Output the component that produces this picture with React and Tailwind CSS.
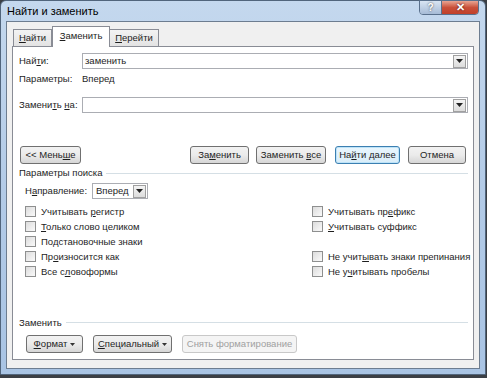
const font = { fontFamily: '"Liberation Sans", Arial, sans-serif' };

function DropButton() {
  return (
    <div className="flex h-[13px] w-[13px] items-center justify-center border border-[#a0a0a0] bg-gradient-to-b from-[#f4f4f4] to-[#dcdcdc]">
      <svg width="7" height="4" viewBox="0 0 7 4">
        <path d="M0 0h7L3.5 4z" fill="#222" />
      </svg>
    </div>
  );
}

function Caret({ color = '#333' }) {
  return (
    <svg width="5" height="3" viewBox="0 0 5 3" className="ml-[3px] inline-block align-middle">
      <path d="M0 0h5L2.5 3z" fill={color} />
    </svg>
  );
}

function Combo({ value }) {
  return (
    <div className="flex h-[16px] flex-1 items-center border border-[#abadb3] bg-white pl-[2px] pr-[1px]">
      <span className="flex-1 text-[#1e1e1e]">{value}</span>
      <DropButton />
    </div>
  );
}

function Btn({ children, className = '', primary, disabled }) {
  return (
    <div
      className={`flex h-[18px] items-center justify-center whitespace-nowrap rounded-[3px] border ${
        primary
          ? 'border-[#3c7fb1] bg-gradient-to-b from-[#eaf6fd] to-[#d9edf9] shadow-[inset_0_0_0_1px_#bde3f8]'
          : disabled
          ? 'border-[#c8c8c8] bg-[#f4f4f4] text-[#a0a0a0]'
          : 'border-[#707070] bg-gradient-to-b from-[#f2f2f2] via-[#ebebeb] to-[#d6d6d6]'
      } ${className}`}
    >
      <span>{children}</span>
    </div>
  );
}

function Check({ children }) {
  return (
    <div className="flex h-[15px] items-center gap-[5px] whitespace-nowrap">
      <div className="h-[11px] w-[11px] border border-[#8e8f8f] bg-gradient-to-br from-[#dcdcdc] to-[#fafafa]" />
      <span>{children}</span>
    </div>
  );
}

function U({ children }) {
  return <span className="underline underline-offset-1">{children}</span>;
}

function GroupLabel({ children }) {
  return (
    <div className="flex items-center gap-[4px]">
      <span>{children}</span>
      <div className="h-px flex-1 bg-[#d5dfe5]" />
    </div>
  );
}

export default function App() {
  return (
    <div className="h-[378px] w-[487px] overflow-hidden bg-[#3b3f45] text-[9.5px] text-[#1e1e1e]" style={font}>
      <div className="relative h-[375px] w-[486px] rounded-t-[6px] border border-[#51657c] bg-gradient-to-b from-[#c4d8ee] via-[#b3cbe7] to-[#a9c4e4] px-[5px] pb-[5px] pt-[20px]">
        <div className="absolute left-[6px] top-[2px] text-[11px] text-black">Найти и заменить</div>
        <div className="absolute right-[6px] top-[-1px] flex h-[15px] overflow-hidden rounded-b-[4px] border border-[#59708c]">
          <div className="flex w-[21px] items-center justify-center bg-gradient-to-b from-[#d9e5f3] to-[#a6bbd6] text-[10px] font-bold text-white [text-shadow:0_0_2px_#333]">?</div>
          <div className="flex w-[37px] items-center justify-center border-l border-[#59708c] bg-gradient-to-b from-[#e8a493] via-[#c9503a] to-[#c0402a] text-[11px] font-bold text-white [text-shadow:0_0_2px_#400]">✕</div>
        </div>
        <div className="flex h-full flex-col border border-[#6d7d90] bg-[#f0f0f0] px-[5px] pb-[8px] pt-[4px]">
          <div className="flex items-end pl-[1px]">
            <div className="flex h-[17px] w-[39px] items-center justify-center border border-b-0 border-[#898c95] bg-gradient-to-b from-[#f3f3f3] to-[#e3e3e3]">
              <span><U>Н</U>айти</span>
            </div>
            <div className="z-10 -mb-px flex h-[21px] w-[58px] items-center justify-center border border-b-0 border-[#898c95] bg-white pb-[2px]">
              <span><U>З</U>аменить</span>
            </div>
            <div className="flex h-[17px] w-[49px] items-center justify-center border border-b-0 border-l-0 border-[#898c95] bg-gradient-to-b from-[#f3f3f3] to-[#e3e3e3]">
              <span><U>П</U>ерейти</span>
            </div>
          </div>
          <div className="flex flex-1 flex-col border border-[#898c95] bg-white pl-[6px] pr-[5px] pt-[6px]">
            <div className="flex items-center">
              <span className="w-[63px] whitespace-nowrap">Най<U>т</U>и:</span>
              <Combo value="заменить" />
            </div>
            <div className="mt-[3px] flex h-[14px] items-center">
              <span className="w-[63px]">Параметры:</span>
              <span>Вперед</span>
            </div>
            <div className="mt-[11px] flex items-center">
              <span className="w-[63px] whitespace-nowrap">Замени<U>т</U>ь <U>н</U>а:</span>
              <Combo value="" />
            </div>
            <div className="mt-[33px] flex items-center">
              <Btn className="ml-[1px] w-[61px]">&lt;&lt; Мень<U>ш</U>е</Btn>
              <div className="flex-1" />
              <Btn className="w-[59px]">За<U>м</U>енить</Btn>
              <Btn className="ml-[7px] w-[70px]">Заменить <U>в</U>се</Btn>
              <Btn primary className="ml-[9px] w-[65px]">На<U>й</U>ти далее</Btn>
              <Btn className="ml-[8px] mr-[2px] w-[58px]">Отмена</Btn>
            </div>
            <div className="mt-[2px]">
              <GroupLabel>Параметры поиска</GroupLabel>
            </div>
            <div className="ml-[6px] mt-[3px] flex items-center">
              <span className="w-[67px] whitespace-nowrap">Н<U>а</U>правление:</span>
              <div className="flex h-[16px] w-[56px] items-center border border-[#abadb3] bg-white pl-[3px] pr-[1px]">
                <span className="flex-1">Вперед</span>
                <DropButton />
              </div>
            </div>
            <div className="ml-[6px] mt-[5px] grid grid-cols-[287px_1fr]">
              <Check>Учитывать <U>р</U>егистр</Check>
              <Check>Учитывать пр<U>е</U>фикс</Check>
              <Check><U>Т</U>олько слово целиком</Check>
              <Check><U>У</U>читывать суффикс</Check>
              <Check>Подстановочные знаки</Check>
              <div />
              <Check>Пр<U>о</U>износится как</Check>
              <Check>Не учит<U>ы</U>вать знаки препинания</Check>
              <Check>Все с<U>л</U>овоформы</Check>
              <Check>Не у<U>ч</U>итывать пробелы</Check>
            </div>
            <div className="flex-1" />
            <div>
              <GroupLabel>Заменить</GroupLabel>
            </div>
            <div className="ml-[7px] mt-[5px] mb-[6px] flex items-center gap-[10px]">
              <Btn className="w-[57px]"><U>Ф</U>ормат<Caret /></Btn>
              <Btn className="w-[79px]"><U>С</U>пециальный<Caret /></Btn>
              <Btn disabled className="w-[115px]">Снять форматирование</Btn>
            </div>
          </div>
        </div>
      </div>
    </div>
  );
}
